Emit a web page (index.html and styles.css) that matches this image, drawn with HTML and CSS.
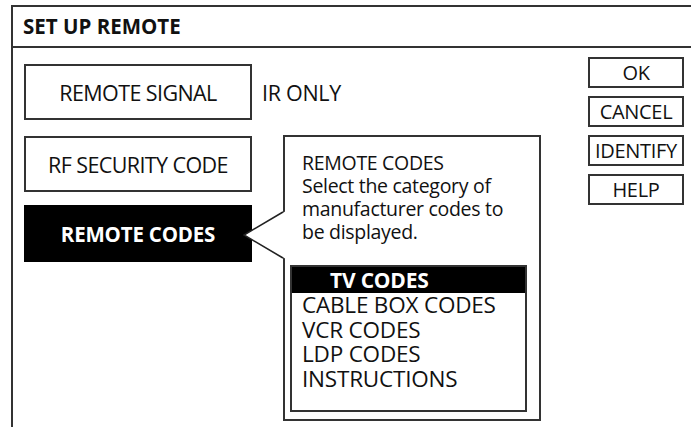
FILE: index.html
```html
<!DOCTYPE html>
<html>
<head>
<meta charset="utf-8">
<title>Set Up Remote</title>
<link rel="stylesheet" href="styles.css">
</head>
<body>
<div class="frame">
  <div class="title">SET UP REMOTE</div>
  <div class="content">
    <div class="main">
      <div class="btn r1">REMOTE SIGNAL</div>
      <div class="value">IR ONLY</div>
      <div class="btn r2">RF SECURITY CODE</div>
      <div class="btn r3 active">REMOTE CODES</div>
      <div class="popup">
        <svg class="pointer" width="43" height="48" viewBox="0 0 43 48">
          <polygon points="43,0 1,24 43,48" fill="#fff"/>
          <polyline points="40,1 1,24 40,47" fill="none" stroke="#222" stroke-width="1.6"/>
        </svg>
        <p class="help">REMOTE CODES<br>Select the category of<br>manufacturer codes to<br>be displayed.</p>
        <ul class="list">
          <li class="sel">TV CODES</li>
          <li>CABLE BOX CODES</li>
          <li>VCR CODES</li>
          <li>LDP CODES</li>
          <li>INSTRUCTIONS</li>
        </ul>
      </div>
    </div>
    <div class="actions">
      <div class="act">OK</div>
      <div class="act">CANCEL</div>
      <div class="act">IDENTIFY</div>
      <div class="act">HELP</div>
    </div>
  </div>
</div>
</body>
</html>
```
FILE: styles.css
```css
html, body {
  margin: 0;
  padding: 0;
  background: #fff;
  overflow: hidden;
}
body {
  width: 691px;
  height: 427px;
  padding: 5px 0 0 11px;
  box-sizing: border-box;
  font-family: "Open Sans", "Liberation Sans", sans-serif;
  color: #111;
}
.frame {
  width: 100%;
  height: 100%;
  box-sizing: border-box;
  border-top: 2px solid #333;
  border-left: 2px solid #333;
}
.title {
  height: 39px;
  line-height: 39px;
  padding-left: 10px;
  font-size: 20.5px;
  font-weight: 700;
  border-bottom: 2px solid #333;
}
.content {
  display: flex;
  padding: 16px 0 0 11px;
}
.main {
  display: grid;
  grid-template-columns: 228px 258px;
  grid-template-rows: 56px 16px 56px 13px 57px auto;
  column-gap: 31px;
}
.btn {
  border: 2px solid #333;
  box-sizing: border-box;
  display: flex;
  align-items: center;
  justify-content: center;
  font-size: 21.5px;
  letter-spacing: -0.6px;
}
.r1 { grid-column: 1; grid-row: 1; }
.r2 { grid-column: 1; grid-row: 3; }
.r3 { grid-column: 1; grid-row: 5; }
.btn.active {
  background: #000;
  border-color: #000;
  color: #fff;
  font-weight: 700;
  font-size: 20.5px;
  letter-spacing: -0.2px;
}
.value {
  grid-column: 2;
  grid-row: 1;
  margin-left: -21px;
  display: flex;
  align-items: center;
  font-size: 21.5px;
  letter-spacing: -0.3px;
}
.popup {
  grid-column: 2;
  grid-row: 3 / span 4;
  margin-top: -1px;
  position: relative;
  height: 286px;
  box-sizing: border-box;
  border: 2px solid #333;
  padding: 0 12px 0 5px;
}
.pointer {
  position: absolute;
  left: -42px;
  top: 74px;
}
.help {
  margin: 14px 0 0 12px;
  font-size: 19.5px;
  line-height: 23px;
  letter-spacing: -0.3px;
}
.list {
  list-style: none;
  margin: 22px 0 0 0;
  padding: 0;
  width: 237px;
  height: 147px;
  box-sizing: border-box;
  border: 2px solid #333;
  font-size: 22.5px;
  line-height: 24.5px;
  letter-spacing: -0.2px;
}
.list li {
  padding-left: 10px;
}
.list li.sel {
  background: #000;
  color: #fff;
  font-weight: 700;
  padding-left: 38px;
  line-height: 26px;
  font-size: 21px;
}
.actions {
  margin: -7px 0 0 47px;
  display: flex;
  flex-direction: column;
  gap: 8px;
}
.act {
  width: 96px;
  height: 31px;
  box-sizing: border-box;
  border: 2px solid #333;
  display: flex;
  align-items: center;
  justify-content: center;
  font-size: 20px;
  letter-spacing: -0.3px;
}
```
